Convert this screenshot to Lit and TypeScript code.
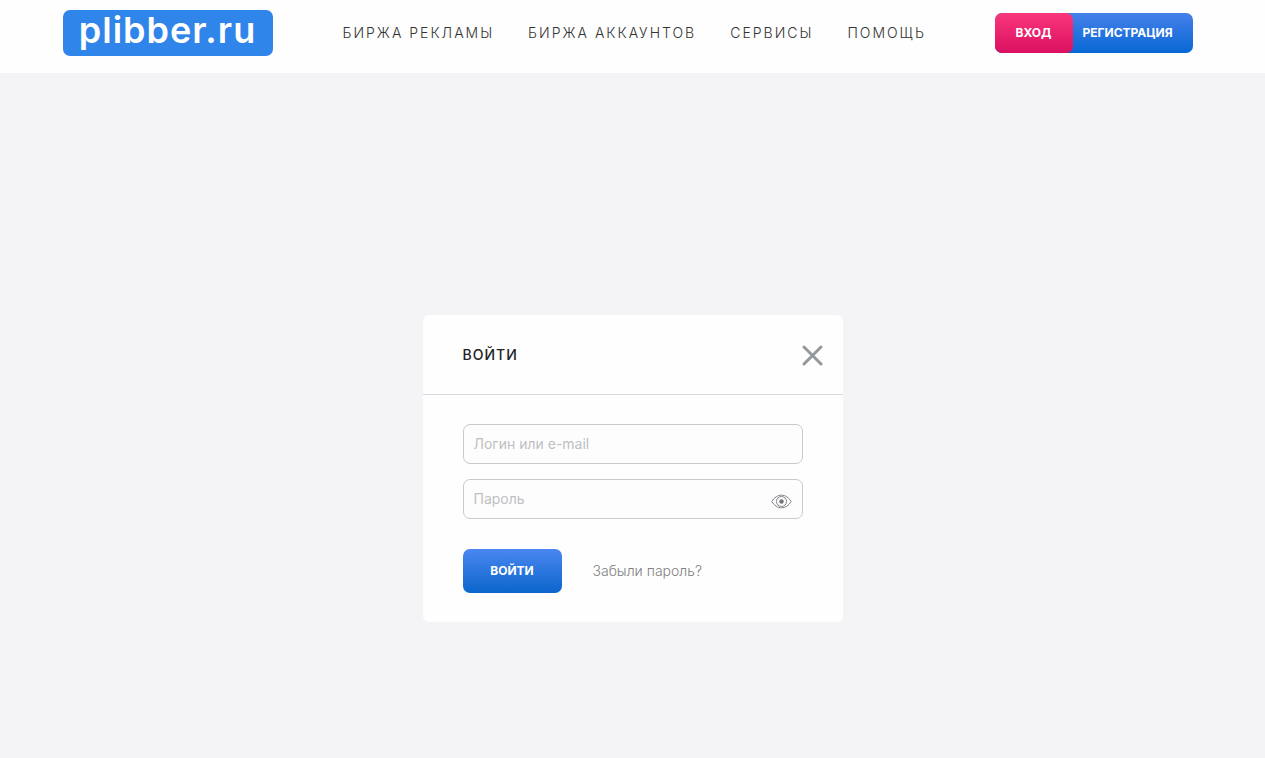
import { LitElement, html, css } from "lit";
import { customElement, state } from "lit/decorators.js";

@customElement("site-header")
class SiteHeader extends LitElement {
  static styles = css`
    :host {
      display: block;
      background: #fdfefd;
    }
    .bar {
      display: flex;
      align-items: flex-start;
      box-sizing: border-box;
      max-width: 1140px;
      min-height: 73px;
      margin: 0 auto;
      padding: 10px 10px 0 0;
    }
    .logo {
      flex: none;
      width: 210px;
      height: 46px;
      border-radius: 7px;
      background: #3085ea;
      color: #fff;
      font: 600 36px/40px "Inter", sans-serif;
      text-align: center;
      text-decoration: none;
      letter-spacing: 1px;
    }
    .menu {
      display: flex;
      gap: 34px;
      margin-left: 70px;
      padding-top: 13px;
    }
    .link {
      color: #333;
      font-size: 14px;
      font-weight: 300;
      line-height: 20px;
      letter-spacing: 2px;
      text-decoration: none;
      text-transform: uppercase;
      white-space: nowrap;
    }
    .account {
      display: flex;
      margin: 3px 0 0 auto;
      border-radius: 7px;
      background: linear-gradient(#4680ea, #0868d4);
    }
    .button {
      height: 40px;
      border: 0;
      border-radius: 7px;
      color: #fff;
      background: none;
      font: 700 12px/40px "Inter", sans-serif;
      text-transform: uppercase;
      cursor: pointer;
    }
    .enter {
      width: 78px;
      padding: 0;
      background: linear-gradient(#f9377b, #da1060);
    }
    .register {
      width: 120px;
      padding: 0 10px 0 0;
    }
  `;

  private links = ["Биржа рекламы", "Биржа аккаунтов", "Сервисы", "Помощь"];

  render() {
    return html`
      <header class="bar">
        <a class="logo" href="#">plibber.ru</a>
        <nav class="menu">
          ${this.links.map((name) => html`<a class="link" href="#">${name}</a>`)}
        </nav>
        <div class="account">
          <button class="button enter" type="button">Вход</button>
          <button class="button register" type="button">Регистрация</button>
        </div>
      </header>
    `;
  }
}

@customElement("login-dialog")
class LoginDialog extends LitElement {
  static styles = css`
    :host {
      display: block;
      width: 100%;
      max-width: 420px;
    }
    .card {
      border-radius: 6px;
      background: #fefefe;
    }
    .head {
      display: flex;
      align-items: center;
      justify-content: space-between;
      box-sizing: border-box;
      height: 80px;
      padding: 0 20px 0 40px;
      border-bottom: 1px solid #d8d9dc;
    }
    .title {
      margin: 0;
      color: #222;
      font-size: 14px;
      font-weight: 500;
      line-height: 20px;
      letter-spacing: 1px;
      text-transform: uppercase;
    }
    .icon {
      display: flex;
      padding: 0;
      border: 0;
      background: none;
      cursor: pointer;
    }
    .close {
      padding-top: 2px;
    }
    .form {
      display: grid;
      gap: 15px;
      padding: 29px 40px;
    }
    .field {
      display: flex;
      align-items: center;
      box-sizing: border-box;
      height: 40px;
      padding: 0 10px;
      border: 1px solid #c9cacd;
      border-radius: 7px;
      background: #fdfdfe;
    }
    .input {
      flex: 1;
      min-width: 0;
      padding: 0;
      border: 0;
      outline: 0;
      background: none;
      color: #333;
      font: 400 14px/20px "Inter", sans-serif;
    }
    .input::placeholder {
      color: #bebfc2;
      opacity: 1;
    }
    .eye {
      padding-top: 5px;
    }
    .actions {
      display: flex;
      align-items: center;
      gap: 31px;
      padding-top: 15px;
    }
    .submit {
      width: 99px;
      height: 44px;
      padding: 0;
      border: 0;
      border-radius: 7px;
      background: linear-gradient(#4b86f0, #0b66cc);
      color: #fff;
      font: 700 12px/44px "Inter", sans-serif;
      text-transform: uppercase;
      cursor: pointer;
    }
    .forgot {
      color: #808080;
      font-size: 14px;
      font-weight: 300;
      line-height: 20px;
      text-decoration: none;
    }
  `;

  @state() private shown = false;

  render() {
    return html`
      <section class="card">
        <div class="head">
          <h1 class="title">Войти</h1>
          <button class="icon close" type="button" aria-label="Закрыть">
            <svg width="21" height="21" viewBox="0 0 21 21" fill="none" stroke="#94989b"
              stroke-width="3" stroke-linecap="round">
              <path d="M2 2l17 17M19 2L2 19" />
            </svg>
          </button>
        </div>
        <form class="form" @submit=${(e: Event) => e.preventDefault()}>
          <div class="field">
            <input class="input" type="text" aria-label="Логин или e-mail" placeholder="Логин или e-mail" />
          </div>
          <div class="field">
            <input class="input" type=${this.shown ? "text" : "password"} aria-label="Пароль" placeholder="Пароль" />
            <button class="icon eye" type="button" aria-label="Показать пароль"
              @click=${() => (this.shown = !this.shown)}>
              <svg width="21" height="15" viewBox="0 0 21 15" fill="none" stroke="#808285">
                <path d="M.8 7.5C3.3 3.5 6.7 1.2 10.5 1.2s7.200 2.300 9.700 6.300c-2.500 4-5.900 6.300-9.700 6.300S3.300 11.500.8 7.500z" />
                <circle cx="10.500" cy="7.500" r="5" />
                <circle cx="10.500" cy="7.500" r="2.200" fill="#737578" stroke="none" />
              </svg>
            </button>
          </div>
          <div class="actions">
            <button class="submit" type="submit">Войти</button>
            <a class="forgot" href="#">Забыли пароль?</a>
          </div>
        </form>
      </section>
    `;
  }
}

@customElement("app-root")
class AppRoot extends LitElement {
  static styles = css`
    :host {
      display: flex;
      flex-direction: column;
      min-height: 100vh;
      background: #f4f4f6;
      font-family: "Inter", sans-serif;
    }
    .main {
      display: flex;
      flex: 1;
      align-items: flex-start;
      justify-content: center;
      padding: 242px 20px 40px;
    }
  `;

  render() {
    return html`
      <site-header></site-header>
      <main class="main"><login-dialog></login-dialog></main>
    `;
  }
}
